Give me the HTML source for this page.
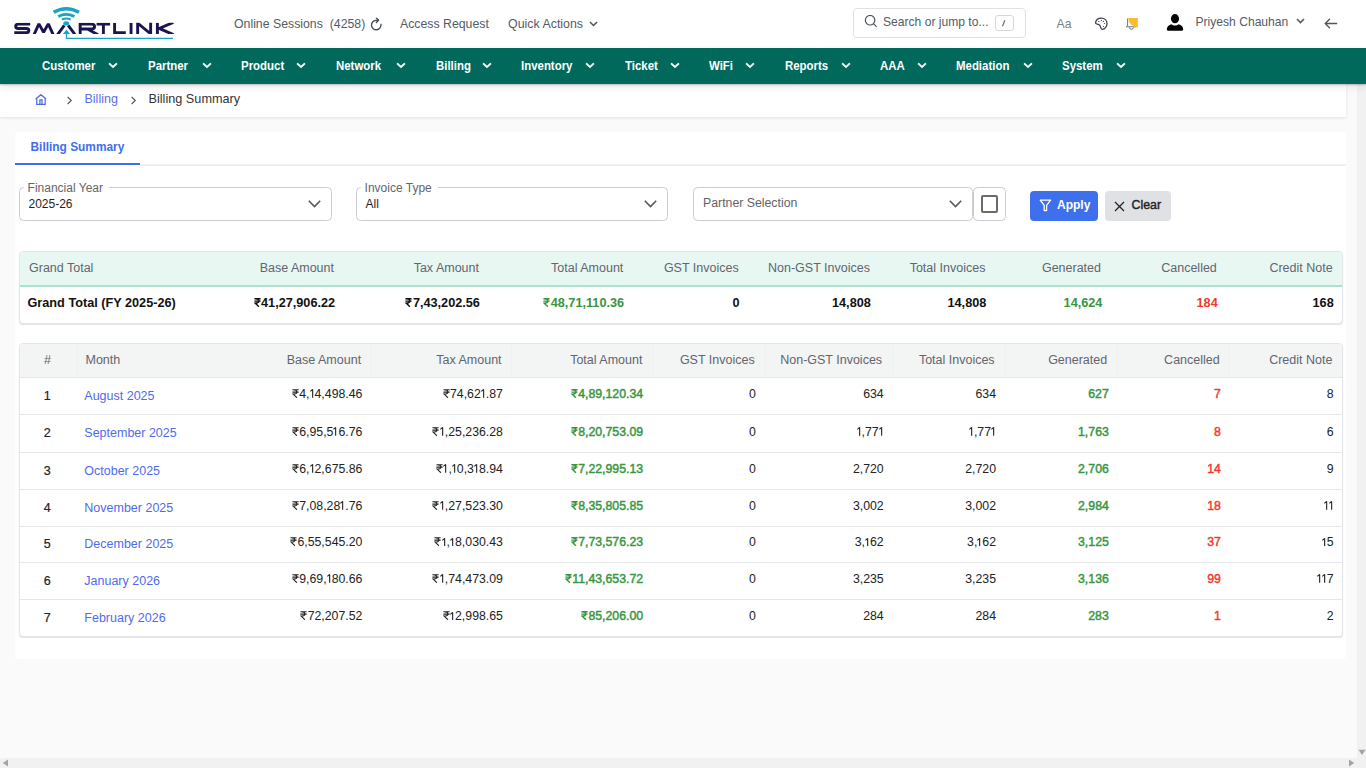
<!DOCTYPE html>
<html><head><meta charset="utf-8"><title>Billing Summary</title><style>
*{box-sizing:border-box;margin:0;padding:0}
html,body{width:1366px;height:768px;overflow:hidden;background:#fafafa;font-family:"Liberation Sans",sans-serif;color:#222}
.t{position:absolute;line-height:1;white-space:nowrap}
.r{text-align:right}
svg.inr{display:inline-block;vertical-align:baseline;margin-right:0.5px;fill:none;stroke:currentColor;stroke-linecap:butt;stroke-linejoin:miter;position:relative;top:0}
#hdr{position:absolute;left:0;top:0;width:1366px;height:48px;background:#fff}
#nav{position:absolute;left:0;top:48px;width:1366px;height:36px;background:#00695c;box-shadow:0 1px 1.5px rgba(0,0,0,.22),0 3px 8px rgba(0,0,0,.09);z-index:3}
#nav .t{color:#fff;font-weight:700;font-size:12.3px;transform:scaleX(.93);transform-origin:0 0}
#nav svg{position:absolute;top:62px}
#crumb{position:absolute;left:0;top:84px;width:1346px;height:33px;background:#fff;box-shadow:0 1px 3px rgba(0,0,0,.1)}
#card{position:absolute;left:15px;top:132px;width:1331px;height:527px;background:#fff;border-radius:4px}
.fld{position:absolute;border:1px solid #c9ccd3;border-radius:4.5px;background:#fff}
.lbl{position:absolute;background:#fff;padding:0 4px;color:#62666b;font-size:12px;line-height:1}
.tbl{position:absolute;border:1px solid #e3e5e8;border-radius:4px;background:#fff;overflow:hidden;box-shadow:0 1px 0 #e6e7eb,0 1px 2px rgba(0,0,0,.05)}
.sb{position:absolute;background:#f1f1f1}
svg.one{display:inline-block;vertical-align:baseline;fill:none;stroke:currentColor;stroke-width:1.1}
</style></head><body>
<div id="hdr">
<svg style="position:absolute;left:0;top:0" width="180" height="46" viewBox="0 0 180 46">
<defs><clipPath id="lc"><rect x="0" y="22.8" width="180" height="11.3"/></clipPath></defs>
<g fill="none" stroke="#1b1452" stroke-width="2.9" stroke-linejoin="miter" stroke-linecap="butt" clip-path="url(#lc)">
<path d="M30.2 24.15H18.2Q15.65 24.15 15.65 26.3Q15.65 28.45 18.2 28.45H26.3Q28.85 28.45 28.85 30.6Q28.85 32.75 26.3 32.75H14.3"/>
<path d="M33.6 35.6L38.9 23.9L43.6 32.2L48.3 23.9L53.6 35.6" stroke-linejoin="bevel"/>
<path d="M57 35.4L64.3 25.3M68.2 25.3L75.6 35.4"/>
<path d="M80.15 34.1V24.15H91.6Q94.6 24.15 94.6 26.55Q94.6 28.95 91.6 28.95H80.15M87.5 28.95L98 34.8"/>
<path d="M96.6 24.15H110.1M103.4 24.15V34.1"/>
<path d="M114.6 22.8V32.75H125.8"/>
<path d="M131.05 22.8V34.1"/>
<path d="M137.65 35V23.2L150.65 33.8V22"/>
<path d="M157.4 22.8V34.1M173.3 22.4L159.2 28.45L173.4 34.6"/>
</g>
<g fill="none" stroke="#1ba3c2" stroke-linecap="butt">
<path d="M53.6 12.3Q66.3 5.2 79 12.3" stroke-width="3.4"/>
<path d="M58.2 16.6Q66.3 12.2 74.4 16.6" stroke-width="2.9"/>
<path d="M62 19.6Q66.3 17.4 70.6 19.6" stroke-width="2.2"/>
<path d="M66.5 34V38.3H172.9" stroke-width="1.3"/>
</g>
<ellipse cx="66.2" cy="23.4" rx="2.9" ry="2.1" fill="#1ba3c2"/>
<path d="M62.9 34.1L66.5 29.5L70.1 34.1Z" fill="#1ba3c2"/>
</svg>
<div class="t" style="left:234px;top:17.5px;font-size:12.3px;color:#555b63">Online Sessions&nbsp; (4258)</div>
<svg style="position:absolute;left:368px;top:16px" width="16" height="16" viewBox="0 0 16 16" fill="none" stroke="#454b52" stroke-width="1.35" stroke-linecap="round" stroke-linejoin="round"><path d="M12.95 8.3A4.75 4.75 0 1 1 7.9 4.3H10.4"/><path d="M8.4 2.2L10.6 4.3L8.4 6.5"/></svg>
<div class="t" style="left:400px;top:17.5px;font-size:12.3px;color:#555b63">Access Request</div>
<div class="t" style="left:508px;top:17.5px;font-size:12.4px;color:#555b63">Quick Actions</div>
<svg style="position:absolute;left:589px;top:20.5px" width="9" height="6" viewBox="0 0 9 6" fill="none" stroke="#4a5058" stroke-width="1.5"><path d="M1 1l3.5 3.5 3.5-3.5"/></svg>
<div style="position:absolute;left:852.5px;top:8px;width:173.5px;height:30px;border:1px solid #dfe1e5;border-radius:4px"></div>
<svg style="position:absolute;left:864px;top:14.5px" width="14" height="14" viewBox="0 0 14 14" fill="none" stroke="#4b5158" stroke-width="1.2"><circle cx="6.1" cy="5.25" r="4.75"/><path d="M9.5 8.7L12.6 11.9"/></svg>
<div class="t" style="left:883px;top:16px;font-size:12.1px;color:#555b63">Search or jump to...</div>
<div style="position:absolute;left:994.5px;top:15px;width:19px;height:15.5px;border:1px solid #d5d8dc;border-radius:3px"></div>
<svg style="position:absolute;left:1000px;top:18px" width="8" height="10" viewBox="0 0 8 10" fill="none" stroke="#5a6067" stroke-width="1.1"><path d="M4.9 2.1L2.5 8.3"/></svg>
<div class="t" style="left:1056.5px;top:18.3px;font-size:12.2px;color:#7a7f85">Aa</div>
<svg style="position:absolute;left:1094px;top:17px" width="15" height="14" viewBox="0 0 15 14" fill="none" stroke="#3d434a" stroke-width="1.3"><path d="M1.5 5.9C1.9 3 4.5 1.1 7.4 1.1C10.6 1.1 13 3.4 13 6.5C13 9.7 10.8 12.3 8.3 12.3C6.9 12.3 6.8 10.9 6.5 9.7C6.2 8.3 5.5 7.8 4.2 7.4C2.8 7 1.4 7 1.5 5.9Z"/><g fill="#3d434a" stroke="none"><circle cx="4.8" cy="4.4" r=".6"/><circle cx="7.4" cy="3.5" r=".6"/><circle cx="9.5" cy="4.4" r=".6"/><circle cx="10.5" cy="6.5" r=".6"/><circle cx="9.4" cy="9.3" r=".6"/></g></svg>
<svg style="position:absolute;left:1124px;top:17px" width="15" height="14" viewBox="0 0 15 14" fill="none" stroke="#70767d" stroke-width="1.0"><path d="M3.6 1.5V8.2C3.6 9 3 9.5 2.3 9.8H12.3"/><path d="M5.3 10.5A2.1 1.7 0 0 0 9.5 10.5"/><path d="M13.85 0.9H4.2A9.65 9.45 0 0 0 13.85 10.35Z" fill="#fbbd2e" stroke="none"/></svg>
<svg style="position:absolute;left:1166px;top:13.5px" width="18" height="18" viewBox="0 0 18 18" fill="#000"><ellipse cx="9" cy="4.65" rx="4.05" ry="4.6"/><path d="M0.8 15.3C0.8 12.5 2.9 10.9 5.4 10.2C6.4 11.1 7.6 11.5 9 11.5C10.4 11.5 11.6 11.1 12.6 10.2C15.1 10.9 17.2 12.5 17.2 15.3V15.5C17.2 16.2 16.7 16.7 16 16.7H2C1.3 16.7 0.8 16.2 0.8 15.5Z"/></svg>
<div class="t" style="left:1195.5px;top:16px;font-size:12.1px;color:#555b63">Priyesh Chauhan</div>
<svg style="position:absolute;left:1296.3px;top:17.9px" width="9" height="6" viewBox="0 0 9 6" fill="none" stroke="#555b63" stroke-width="1.6"><path d="M1 1l3.5 3.5 3.5-3.5"/></svg>
<svg style="position:absolute;left:1323.5px;top:18px" width="14" height="12" viewBox="0 0 14 12" fill="none" stroke="#4f555c" stroke-width="1.3"><path d="M13.2 5.5H1.2M5.9 0.8L1.2 5.5 5.9 10.2"/></svg>
</div>
<div id="nav">
<div class="t" style="left:41.6px;top:12.2px">Customer</div>
<svg style="position:absolute;left:107.8px;top:14.1px" width="10" height="7" viewBox="0 0 10 7" fill="none" stroke="#fff" stroke-width="1.85"><path d="M1.1 1.3l3.9 3.7 3.9-3.7"/></svg>
<div class="t" style="left:147.6px;top:12.2px">Partner</div>
<svg style="position:absolute;left:201.7px;top:14.1px" width="10" height="7" viewBox="0 0 10 7" fill="none" stroke="#fff" stroke-width="1.85"><path d="M1.1 1.3l3.9 3.7 3.9-3.7"/></svg>
<div class="t" style="left:241.1px;top:12.2px">Product</div>
<svg style="position:absolute;left:296.2px;top:14.1px" width="10" height="7" viewBox="0 0 10 7" fill="none" stroke="#fff" stroke-width="1.85"><path d="M1.1 1.3l3.9 3.7 3.9-3.7"/></svg>
<div class="t" style="left:335.6px;top:12.2px">Network</div>
<svg style="position:absolute;left:396.0px;top:14.1px" width="10" height="7" viewBox="0 0 10 7" fill="none" stroke="#fff" stroke-width="1.85"><path d="M1.1 1.3l3.9 3.7 3.9-3.7"/></svg>
<div class="t" style="left:435.5px;top:12.2px">Billing</div>
<svg style="position:absolute;left:481.8px;top:14.1px" width="10" height="7" viewBox="0 0 10 7" fill="none" stroke="#fff" stroke-width="1.85"><path d="M1.1 1.3l3.9 3.7 3.9-3.7"/></svg>
<div class="t" style="left:520.8px;top:12.2px">Inventory</div>
<svg style="position:absolute;left:584.8px;top:14.1px" width="10" height="7" viewBox="0 0 10 7" fill="none" stroke="#fff" stroke-width="1.85"><path d="M1.1 1.3l3.9 3.7 3.9-3.7"/></svg>
<div class="t" style="left:624.6px;top:12.2px">Ticket</div>
<svg style="position:absolute;left:670.1px;top:14.1px" width="10" height="7" viewBox="0 0 10 7" fill="none" stroke="#fff" stroke-width="1.85"><path d="M1.1 1.3l3.9 3.7 3.9-3.7"/></svg>
<div class="t" style="left:709.1px;top:12.2px">WiFi</div>
<svg style="position:absolute;left:745.4px;top:14.1px" width="10" height="7" viewBox="0 0 10 7" fill="none" stroke="#fff" stroke-width="1.85"><path d="M1.1 1.3l3.9 3.7 3.9-3.7"/></svg>
<div class="t" style="left:784.5px;top:12.2px">Reports</div>
<svg style="position:absolute;left:840.7px;top:14.1px" width="10" height="7" viewBox="0 0 10 7" fill="none" stroke="#fff" stroke-width="1.85"><path d="M1.1 1.3l3.9 3.7 3.9-3.7"/></svg>
<div class="t" style="left:880.1px;top:12.2px">AAA</div>
<svg style="position:absolute;left:916.5px;top:14.1px" width="10" height="7" viewBox="0 0 10 7" fill="none" stroke="#fff" stroke-width="1.85"><path d="M1.1 1.3l3.9 3.7 3.9-3.7"/></svg>
<div class="t" style="left:955.9px;top:12.2px">Mediation</div>
<svg style="position:absolute;left:1022.7px;top:14.1px" width="10" height="7" viewBox="0 0 10 7" fill="none" stroke="#fff" stroke-width="1.85"><path d="M1.1 1.3l3.9 3.7 3.9-3.7"/></svg>
<div class="t" style="left:1061.6px;top:12.2px">System</div>
<svg style="position:absolute;left:1115.6px;top:14.1px" width="10" height="7" viewBox="0 0 10 7" fill="none" stroke="#fff" stroke-width="1.85"><path d="M1.1 1.3l3.9 3.7 3.9-3.7"/></svg>
</div>
<div id="crumb">
<svg style="position:absolute;left:34.5px;top:10px" width="12" height="11" viewBox="0 0 12 11" fill="none" stroke="#4a67ee" stroke-width="1.2"><path d="M0.6 5L5.9 0.7L11.2 5M1.8 4V10.4H10.2V4M4.9 10.4V5.8H7V10.4"/></svg>
<svg style="position:absolute;left:65.5px;top:11.5px" width="7" height="9" viewBox="0 0 7 9" fill="none" stroke="#4b5058" stroke-width="1.15"><path d="M1.6 0.9l3.6 3.6-3.6 3.6"/></svg>
<div class="t" style="left:84.5px;top:9px;font-size:12.5px;color:#5b6ee8">Billing</div>
<svg style="position:absolute;left:130.3px;top:11.5px" width="7" height="9" viewBox="0 0 7 9" fill="none" stroke="#4b5058" stroke-width="1.15"><path d="M1.6 0.9l3.6 3.6-3.6 3.6"/></svg>
<div class="t" style="left:148.5px;top:9px;font-size:12.7px;color:#333">Billing Summary</div>
</div>
<div id="card"></div>
<div class="t" style="left:30.5px;top:141.8px;font-size:11.9px;font-weight:700;color:#3e6fec">Billing Summary</div>
<div style="position:absolute;left:15px;top:163px;width:125px;height:2px;background:#3e6fec"></div>
<div style="position:absolute;left:140px;top:164px;width:1206px;height:1.5px;background:#eeeff1"></div>
<div class="fld" style="left:19.0px;top:187px;width:312.5px;height:34px"></div>
<div class="lbl" style="left:23.6px;top:181.5px;height:12px;padding:0 6.5px 0 4px">Financial Year</div>
<div class="t" style="left:28.5px;top:197.7px;font-size:12px;color:#1f1f1f">2025-26</div>
<svg style="position:absolute;left:307.7px;top:200px" width="13" height="8" viewBox="0 0 13 8" fill="none" stroke="#555" stroke-width="1.5"><path d="M0.8 0.8l5.7 5.8 5.7-5.8"/></svg>
<div class="fld" style="left:356.0px;top:187px;width:312.0px;height:34px"></div>
<div class="lbl" style="left:360.6px;top:181.5px;height:12px;padding:0 6.5px 0 4px">Invoice Type</div>
<div class="t" style="left:365.5px;top:197.7px;font-size:12px;color:#1f1f1f">All</div>
<svg style="position:absolute;left:644.2px;top:200px" width="13" height="8" viewBox="0 0 13 8" fill="none" stroke="#555" stroke-width="1.5"><path d="M0.8 0.8l5.7 5.8 5.7-5.8"/></svg>
<div class="fld" style="left:693px;top:187px;width:280px;height:34px"></div>
<div class="t" style="left:703px;top:196.5px;font-size:12.3px;color:#5f6368">Partner Selection</div>
<svg style="position:absolute;left:949px;top:200px" width="13" height="8" viewBox="0 0 13 8" fill="none" stroke="#555" stroke-width="1.5"><path d="M0.8 0.8l5.7 5.8 5.7-5.8"/></svg>
<div class="fld" style="left:972.5px;top:187px;width:33.5px;height:34px;background:transparent"></div>
<div style="position:absolute;left:980.5px;top:195.3px;width:17.3px;height:17.3px;border:2px solid #6b6b6b;border-radius:2px"></div>
<div style="position:absolute;left:1030px;top:191px;width:68px;height:30px;background:#3e6fec;border-radius:4px"></div>
<svg style="position:absolute;left:1038.5px;top:199.4px" width="13" height="13" viewBox="0 0 13 13" fill="none" stroke="#fff" stroke-width="1.3" stroke-linejoin="round"><path d="M1.2 1.2h10.4l-4 5.2v5.2H5.2V6.4z"/></svg>
<div class="t" style="left:1057px;top:198.5px;font-size:12px;font-weight:700;color:#fff">Apply</div>
<div style="position:absolute;left:1105px;top:191px;width:66px;height:30px;background:#dfe1e5;border-radius:4px"></div>
<svg style="position:absolute;left:1114px;top:200.5px" width="11" height="11" viewBox="0 0 11 11" fill="none" stroke="#222" stroke-width="1.3"><path d="M1 1l9 9M10 1l-9 9"/></svg>
<div class="t" style="left:1131.5px;top:198.5px;font-size:12.4px;color:#222;-webkit-text-stroke:.4px currentColor">Clear</div>
<div class="tbl" style="left:19px;top:251px;width:1324px;height:73px">
<div style="position:absolute;left:0;top:0;width:100%;height:33px;background:#e8f7f2"></div>
<div style="position:absolute;left:0;top:33px;width:100%;height:2px;background:#a9e3cd"></div>
</div>
<div class="t" style="left:29px;top:262.4px;font-size:12.5px;color:#5f6670">Grand Total</div>
<div class="t r" style="right:1032.0px;top:262.4px;font-size:12.5px;color:#5f6670">Base Amount</div>
<div class="t r" style="right:887.0px;top:262.4px;font-size:12.5px;color:#5f6670">Tax Amount</div>
<div class="t r" style="right:742.7px;top:262.4px;font-size:12.5px;color:#5f6670">Total Amount</div>
<div class="t r" style="right:627.3px;top:262.4px;font-size:12.5px;color:#5f6670">GST Invoices</div>
<div class="t r" style="right:496.1px;top:262.4px;font-size:12.5px;color:#5f6670">Non-GST Invoices</div>
<div class="t r" style="right:380.6px;top:262.4px;font-size:12.5px;color:#5f6670">Total Invoices</div>
<div class="t r" style="right:265.0px;top:262.4px;font-size:12.5px;color:#5f6670">Generated</div>
<div class="t r" style="right:149.2px;top:262.4px;font-size:12.5px;color:#5f6670">Cancelled</div>
<div class="t r" style="right:33.4px;top:262.4px;font-size:12.5px;color:#5f6670">Credit Note</div>
<div class="t" style="left:27.5px;top:296.5px;font-size:12.7px;font-weight:700;color:#111">Grand Total (FY 2025-26)</div>
<div class="t r" style="right:1030.9px;top:296.5px;font-size:12.7px;font-weight:700;color:#111"><svg class="inr" width="7" height="9" viewBox="0 0 7 9" style="stroke-width:1.45"><path d="M0.4 0.7H6.6M0.4 3.1H6.6M1.2 0.7C4.2 0.7 4.9 1.9 4.9 3C4.9 4.3 3.8 5.1 1.1 5.1L4.9 8.7"/></svg>41,27,906.22</div>
<div class="t r" style="right:886.1px;top:296.5px;font-size:12.7px;font-weight:700;color:#111"><svg class="inr" width="7" height="9" viewBox="0 0 7 9" style="stroke-width:1.45"><path d="M0.4 0.7H6.6M0.4 3.1H6.6M1.2 0.7C4.2 0.7 4.9 1.9 4.9 3C4.9 4.3 3.8 5.1 1.1 5.1L4.9 8.7"/></svg>7,43,202.56</div>
<div class="t r" style="right:741.9px;top:296.5px;font-size:12.7px;font-weight:700;color:#37963f"><svg class="inr" width="7" height="9" viewBox="0 0 7 9" style="stroke-width:1.45"><path d="M0.4 0.7H6.6M0.4 3.1H6.6M1.2 0.7C4.2 0.7 4.9 1.9 4.9 3C4.9 4.3 3.8 5.1 1.1 5.1L4.9 8.7"/></svg>48,71,110.36</div>
<div class="t r" style="right:626.4px;top:296.5px;font-size:12.7px;font-weight:700;color:#111">0</div>
<div class="t r" style="right:495.2px;top:296.5px;font-size:12.7px;font-weight:700;color:#111">14,808</div>
<div class="t r" style="right:379.7px;top:296.5px;font-size:12.7px;font-weight:700;color:#111">14,808</div>
<div class="t r" style="right:263.6px;top:296.5px;font-size:12.7px;font-weight:700;color:#37963f">14,624</div>
<div class="t r" style="right:148.3px;top:296.5px;font-size:12.7px;font-weight:700;color:#ef3b2d">184</div>
<div class="t r" style="right:32.3px;top:296.5px;font-size:12.7px;font-weight:700;color:#111">168</div>
<div class="tbl" style="left:19px;top:343px;width:1324px;height:294px">
<div style="position:absolute;left:0;top:0;width:100%;height:33px;background:#f3f4f4"></div>
<div style="position:absolute;left:56.5px;top:0;width:1px;height:33px;background:#eeefef"></div>
<div style="position:absolute;left:351.3px;top:0;width:1px;height:33px;background:#eeefef"></div>
<div style="position:absolute;left:491.0px;top:0;width:1px;height:33px;background:#eeefef"></div>
<div style="position:absolute;left:632.0px;top:0;width:1px;height:33px;background:#eeefef"></div>
<div style="position:absolute;left:744.7px;top:0;width:1px;height:33px;background:#eeefef"></div>
<div style="position:absolute;left:872.0px;top:0;width:1px;height:33px;background:#eeefef"></div>
<div style="position:absolute;left:984.5px;top:0;width:1px;height:33px;background:#eeefef"></div>
<div style="position:absolute;left:1096.6px;top:0;width:1px;height:33px;background:#eeefef"></div>
<div style="position:absolute;left:1208.0px;top:0;width:1px;height:33px;background:#eeefef"></div>
<div style="position:absolute;left:0;top:32.7px;width:100%;height:1.4px;background:#e6e7ea"></div>
<div style="position:absolute;left:0;top:70.1px;width:100%;height:1.4px;background:#e6e7ea"></div>
<div style="position:absolute;left:0;top:107.9px;width:100%;height:1.4px;background:#e6e7ea"></div>
<div style="position:absolute;left:0;top:145.0px;width:100%;height:1.4px;background:#e6e7ea"></div>
<div style="position:absolute;left:0;top:181.7px;width:100%;height:1.4px;background:#e6e7ea"></div>
<div style="position:absolute;left:0;top:217.9px;width:100%;height:1.4px;background:#e6e7ea"></div>
<div style="position:absolute;left:0;top:255.1px;width:100%;height:1.4px;background:#e6e7ea"></div>
</div>
<div class="t" style="left:44px;top:353.5px;font-size:12.5px;color:#5f6670">#</div>
<div class="t" style="left:85.5px;top:353.5px;font-size:12.5px;color:#5f6670">Month</div>
<div class="t r" style="right:1004.9px;top:353.5px;font-size:12.5px;color:#5f6670">Base Amount</div>
<div class="t r" style="right:864.4px;top:353.5px;font-size:12.5px;color:#5f6670">Tax Amount</div>
<div class="t r" style="right:723.6px;top:353.5px;font-size:12.5px;color:#5f6670">Total Amount</div>
<div class="t r" style="right:611.3px;top:353.5px;font-size:12.5px;color:#5f6670">GST Invoices</div>
<div class="t r" style="right:483.9px;top:353.5px;font-size:12.5px;color:#5f6670">Non-GST Invoices</div>
<div class="t r" style="right:371.4px;top:353.5px;font-size:12.5px;color:#5f6670">Total Invoices</div>
<div class="t r" style="right:258.8px;top:353.5px;font-size:12.5px;color:#5f6670">Generated</div>
<div class="t r" style="right:146.3px;top:353.5px;font-size:12.5px;color:#5f6670">Cancelled</div>
<div class="t r" style="right:33.6px;top:353.5px;font-size:12.5px;color:#5f6670">Credit Note</div>
<div class="t" style="left:37.2px;width:20px;text-align:center;top:389.7px;font-size:12.5px;color:#222;-webkit-text-stroke:.2px currentColor">1</div>
<div class="t" style="left:84.3px;top:389.7px;font-size:12.5px;color:#4f6bed">August 2025</div>
<div class="t r" style="right:1003.6px;top:387.9px;font-size:12.3px;color:#222"><svg class="inr" width="7" height="9" viewBox="0 0 7 9" style="stroke-width:1.1"><path d="M0.4 0.7H6.6M0.4 3.1H6.6M1.2 0.7C4.2 0.7 4.9 1.9 4.9 3C4.9 4.3 3.8 5.1 1.1 5.1L4.9 8.7"/></svg>4,<svg class="one" width="5" height="8.8" viewBox="0 0 5 8.8"><path d="M2.65 0.15V8.8M2.65 0.4L0.35 2.3"/></svg>4,498.46</div>
<div class="t r" style="right:863.1px;top:387.9px;font-size:12.3px;color:#222"><svg class="inr" width="7" height="9" viewBox="0 0 7 9" style="stroke-width:1.1"><path d="M0.4 0.7H6.6M0.4 3.1H6.6M1.2 0.7C4.2 0.7 4.9 1.9 4.9 3C4.9 4.3 3.8 5.1 1.1 5.1L4.9 8.7"/></svg>74,62<svg class="one" width="5" height="8.8" viewBox="0 0 5 8.8"><path d="M2.65 0.15V8.8M2.65 0.4L0.35 2.3"/></svg>.87</div>
<div class="t r" style="right:722.9px;top:387.9px;font-size:12.3px;color:#37963f;-webkit-text-stroke:.45px currentColor"><svg class="inr" width="7" height="9" viewBox="0 0 7 9" style="stroke-width:1.45"><path d="M0.4 0.7H6.6M0.4 3.1H6.6M1.2 0.7C4.2 0.7 4.9 1.9 4.9 3C4.9 4.3 3.8 5.1 1.1 5.1L4.9 8.7"/></svg>4,89,120.34</div>
<div class="t r" style="right:610.1px;top:387.9px;font-size:12.3px;color:#222">0</div>
<div class="t r" style="right:482.3px;top:387.9px;font-size:12.3px;color:#222">634</div>
<div class="t r" style="right:370.0px;top:387.9px;font-size:12.3px;color:#222">634</div>
<div class="t r" style="right:257.2px;top:387.9px;font-size:12.3px;color:#37963f;-webkit-text-stroke:.45px currentColor">627</div>
<div class="t r" style="right:145.2px;top:387.9px;font-size:12.3px;color:#ef3b2d;-webkit-text-stroke:.45px currentColor">7</div>
<div class="t r" style="right:32.3px;top:387.9px;font-size:12.3px;color:#222">8</div>
<div class="t" style="left:37.2px;width:20px;text-align:center;top:427.3px;font-size:12.5px;color:#222;-webkit-text-stroke:.2px currentColor">2</div>
<div class="t" style="left:84.3px;top:427.3px;font-size:12.5px;color:#4f6bed">September 2025</div>
<div class="t r" style="right:1003.6px;top:425.5px;font-size:12.3px;color:#222"><svg class="inr" width="7" height="9" viewBox="0 0 7 9" style="stroke-width:1.1"><path d="M0.4 0.7H6.6M0.4 3.1H6.6M1.2 0.7C4.2 0.7 4.9 1.9 4.9 3C4.9 4.3 3.8 5.1 1.1 5.1L4.9 8.7"/></svg>6,95,5<svg class="one" width="5" height="8.8" viewBox="0 0 5 8.8"><path d="M2.65 0.15V8.8M2.65 0.4L0.35 2.3"/></svg>6.76</div>
<div class="t r" style="right:863.1px;top:425.5px;font-size:12.3px;color:#222"><svg class="inr" width="7" height="9" viewBox="0 0 7 9" style="stroke-width:1.1"><path d="M0.4 0.7H6.6M0.4 3.1H6.6M1.2 0.7C4.2 0.7 4.9 1.9 4.9 3C4.9 4.3 3.8 5.1 1.1 5.1L4.9 8.7"/></svg><svg class="one" width="5" height="8.8" viewBox="0 0 5 8.8"><path d="M2.65 0.15V8.8M2.65 0.4L0.35 2.3"/></svg>,25,236.28</div>
<div class="t r" style="right:722.9px;top:425.5px;font-size:12.3px;color:#37963f;-webkit-text-stroke:.45px currentColor"><svg class="inr" width="7" height="9" viewBox="0 0 7 9" style="stroke-width:1.45"><path d="M0.4 0.7H6.6M0.4 3.1H6.6M1.2 0.7C4.2 0.7 4.9 1.9 4.9 3C4.9 4.3 3.8 5.1 1.1 5.1L4.9 8.7"/></svg>8,20,753.09</div>
<div class="t r" style="right:610.1px;top:425.5px;font-size:12.3px;color:#222">0</div>
<div class="t r" style="right:482.3px;top:425.5px;font-size:12.3px;color:#222"><svg class="one" width="5" height="8.8" viewBox="0 0 5 8.8"><path d="M2.65 0.15V8.8M2.65 0.4L0.35 2.3"/></svg>,77<svg class="one" width="5" height="8.8" viewBox="0 0 5 8.8"><path d="M2.65 0.15V8.8M2.65 0.4L0.35 2.3"/></svg></div>
<div class="t r" style="right:370.0px;top:425.5px;font-size:12.3px;color:#222"><svg class="one" width="5" height="8.8" viewBox="0 0 5 8.8"><path d="M2.65 0.15V8.8M2.65 0.4L0.35 2.3"/></svg>,77<svg class="one" width="5" height="8.8" viewBox="0 0 5 8.8"><path d="M2.65 0.15V8.8M2.65 0.4L0.35 2.3"/></svg></div>
<div class="t r" style="right:257.2px;top:425.5px;font-size:12.3px;color:#37963f;-webkit-text-stroke:.45px currentColor">1,763</div>
<div class="t r" style="right:145.2px;top:425.5px;font-size:12.3px;color:#ef3b2d;-webkit-text-stroke:.45px currentColor">8</div>
<div class="t r" style="right:32.3px;top:425.5px;font-size:12.3px;color:#222">6</div>
<div class="t" style="left:37.2px;width:20px;text-align:center;top:464.8px;font-size:12.5px;color:#222;-webkit-text-stroke:.2px currentColor">3</div>
<div class="t" style="left:84.3px;top:464.8px;font-size:12.5px;color:#4f6bed">October 2025</div>
<div class="t r" style="right:1003.6px;top:463.0px;font-size:12.3px;color:#222"><svg class="inr" width="7" height="9" viewBox="0 0 7 9" style="stroke-width:1.1"><path d="M0.4 0.7H6.6M0.4 3.1H6.6M1.2 0.7C4.2 0.7 4.9 1.9 4.9 3C4.9 4.3 3.8 5.1 1.1 5.1L4.9 8.7"/></svg>6,<svg class="one" width="5" height="8.8" viewBox="0 0 5 8.8"><path d="M2.65 0.15V8.8M2.65 0.4L0.35 2.3"/></svg>2,675.86</div>
<div class="t r" style="right:863.1px;top:463.0px;font-size:12.3px;color:#222"><svg class="inr" width="7" height="9" viewBox="0 0 7 9" style="stroke-width:1.1"><path d="M0.4 0.7H6.6M0.4 3.1H6.6M1.2 0.7C4.2 0.7 4.9 1.9 4.9 3C4.9 4.3 3.8 5.1 1.1 5.1L4.9 8.7"/></svg><svg class="one" width="5" height="8.8" viewBox="0 0 5 8.8"><path d="M2.65 0.15V8.8M2.65 0.4L0.35 2.3"/></svg>,<svg class="one" width="5" height="8.8" viewBox="0 0 5 8.8"><path d="M2.65 0.15V8.8M2.65 0.4L0.35 2.3"/></svg>0,3<svg class="one" width="5" height="8.8" viewBox="0 0 5 8.8"><path d="M2.65 0.15V8.8M2.65 0.4L0.35 2.3"/></svg>8.94</div>
<div class="t r" style="right:722.9px;top:463.0px;font-size:12.3px;color:#37963f;-webkit-text-stroke:.45px currentColor"><svg class="inr" width="7" height="9" viewBox="0 0 7 9" style="stroke-width:1.45"><path d="M0.4 0.7H6.6M0.4 3.1H6.6M1.2 0.7C4.2 0.7 4.9 1.9 4.9 3C4.9 4.3 3.8 5.1 1.1 5.1L4.9 8.7"/></svg>7,22,995.13</div>
<div class="t r" style="right:610.1px;top:463.0px;font-size:12.3px;color:#222">0</div>
<div class="t r" style="right:482.3px;top:463.0px;font-size:12.3px;color:#222">2,720</div>
<div class="t r" style="right:370.0px;top:463.0px;font-size:12.3px;color:#222">2,720</div>
<div class="t r" style="right:257.2px;top:463.0px;font-size:12.3px;color:#37963f;-webkit-text-stroke:.45px currentColor">2,706</div>
<div class="t r" style="right:145.2px;top:463.0px;font-size:12.3px;color:#ef3b2d;-webkit-text-stroke:.45px currentColor">14</div>
<div class="t r" style="right:32.3px;top:463.0px;font-size:12.3px;color:#222">9</div>
<div class="t" style="left:37.2px;width:20px;text-align:center;top:501.7px;font-size:12.5px;color:#222;-webkit-text-stroke:.2px currentColor">4</div>
<div class="t" style="left:84.3px;top:501.7px;font-size:12.5px;color:#4f6bed">November 2025</div>
<div class="t r" style="right:1003.6px;top:499.9px;font-size:12.3px;color:#222"><svg class="inr" width="7" height="9" viewBox="0 0 7 9" style="stroke-width:1.1"><path d="M0.4 0.7H6.6M0.4 3.1H6.6M1.2 0.7C4.2 0.7 4.9 1.9 4.9 3C4.9 4.3 3.8 5.1 1.1 5.1L4.9 8.7"/></svg>7,08,28<svg class="one" width="5" height="8.8" viewBox="0 0 5 8.8"><path d="M2.65 0.15V8.8M2.65 0.4L0.35 2.3"/></svg>.76</div>
<div class="t r" style="right:863.1px;top:499.9px;font-size:12.3px;color:#222"><svg class="inr" width="7" height="9" viewBox="0 0 7 9" style="stroke-width:1.1"><path d="M0.4 0.7H6.6M0.4 3.1H6.6M1.2 0.7C4.2 0.7 4.9 1.9 4.9 3C4.9 4.3 3.8 5.1 1.1 5.1L4.9 8.7"/></svg><svg class="one" width="5" height="8.8" viewBox="0 0 5 8.8"><path d="M2.65 0.15V8.8M2.65 0.4L0.35 2.3"/></svg>,27,523.30</div>
<div class="t r" style="right:722.9px;top:499.9px;font-size:12.3px;color:#37963f;-webkit-text-stroke:.45px currentColor"><svg class="inr" width="7" height="9" viewBox="0 0 7 9" style="stroke-width:1.45"><path d="M0.4 0.7H6.6M0.4 3.1H6.6M1.2 0.7C4.2 0.7 4.9 1.9 4.9 3C4.9 4.3 3.8 5.1 1.1 5.1L4.9 8.7"/></svg>8,35,805.85</div>
<div class="t r" style="right:610.1px;top:499.9px;font-size:12.3px;color:#222">0</div>
<div class="t r" style="right:482.3px;top:499.9px;font-size:12.3px;color:#222">3,002</div>
<div class="t r" style="right:370.0px;top:499.9px;font-size:12.3px;color:#222">3,002</div>
<div class="t r" style="right:257.2px;top:499.9px;font-size:12.3px;color:#37963f;-webkit-text-stroke:.45px currentColor">2,984</div>
<div class="t r" style="right:145.2px;top:499.9px;font-size:12.3px;color:#ef3b2d;-webkit-text-stroke:.45px currentColor">18</div>
<div class="t r" style="right:32.3px;top:499.9px;font-size:12.3px;color:#222"><svg class="one" width="5" height="8.8" viewBox="0 0 5 8.8"><path d="M2.65 0.15V8.8M2.65 0.4L0.35 2.3"/></svg><svg class="one" width="5" height="8.8" viewBox="0 0 5 8.8"><path d="M2.65 0.15V8.8M2.65 0.4L0.35 2.3"/></svg></div>
<div class="t" style="left:37.2px;width:20px;text-align:center;top:538.1px;font-size:12.5px;color:#222;-webkit-text-stroke:.2px currentColor">5</div>
<div class="t" style="left:84.3px;top:538.1px;font-size:12.5px;color:#4f6bed">December 2025</div>
<div class="t r" style="right:1003.6px;top:536.3px;font-size:12.3px;color:#222"><svg class="inr" width="7" height="9" viewBox="0 0 7 9" style="stroke-width:1.1"><path d="M0.4 0.7H6.6M0.4 3.1H6.6M1.2 0.7C4.2 0.7 4.9 1.9 4.9 3C4.9 4.3 3.8 5.1 1.1 5.1L4.9 8.7"/></svg>6,55,545.20</div>
<div class="t r" style="right:863.1px;top:536.3px;font-size:12.3px;color:#222"><svg class="inr" width="7" height="9" viewBox="0 0 7 9" style="stroke-width:1.1"><path d="M0.4 0.7H6.6M0.4 3.1H6.6M1.2 0.7C4.2 0.7 4.9 1.9 4.9 3C4.9 4.3 3.8 5.1 1.1 5.1L4.9 8.7"/></svg><svg class="one" width="5" height="8.8" viewBox="0 0 5 8.8"><path d="M2.65 0.15V8.8M2.65 0.4L0.35 2.3"/></svg>,<svg class="one" width="5" height="8.8" viewBox="0 0 5 8.8"><path d="M2.65 0.15V8.8M2.65 0.4L0.35 2.3"/></svg>8,030.43</div>
<div class="t r" style="right:722.9px;top:536.3px;font-size:12.3px;color:#37963f;-webkit-text-stroke:.45px currentColor"><svg class="inr" width="7" height="9" viewBox="0 0 7 9" style="stroke-width:1.45"><path d="M0.4 0.7H6.6M0.4 3.1H6.6M1.2 0.7C4.2 0.7 4.9 1.9 4.9 3C4.9 4.3 3.8 5.1 1.1 5.1L4.9 8.7"/></svg>7,73,576.23</div>
<div class="t r" style="right:610.1px;top:536.3px;font-size:12.3px;color:#222">0</div>
<div class="t r" style="right:482.3px;top:536.3px;font-size:12.3px;color:#222">3,<svg class="one" width="5" height="8.8" viewBox="0 0 5 8.8"><path d="M2.65 0.15V8.8M2.65 0.4L0.35 2.3"/></svg>62</div>
<div class="t r" style="right:370.0px;top:536.3px;font-size:12.3px;color:#222">3,<svg class="one" width="5" height="8.8" viewBox="0 0 5 8.8"><path d="M2.65 0.15V8.8M2.65 0.4L0.35 2.3"/></svg>62</div>
<div class="t r" style="right:257.2px;top:536.3px;font-size:12.3px;color:#37963f;-webkit-text-stroke:.45px currentColor">3,125</div>
<div class="t r" style="right:145.2px;top:536.3px;font-size:12.3px;color:#ef3b2d;-webkit-text-stroke:.45px currentColor">37</div>
<div class="t r" style="right:32.3px;top:536.3px;font-size:12.3px;color:#222"><svg class="one" width="5" height="8.8" viewBox="0 0 5 8.8"><path d="M2.65 0.15V8.8M2.65 0.4L0.35 2.3"/></svg>5</div>
<div class="t" style="left:37.2px;width:20px;text-align:center;top:574.8px;font-size:12.5px;color:#222;-webkit-text-stroke:.2px currentColor">6</div>
<div class="t" style="left:84.3px;top:574.8px;font-size:12.5px;color:#4f6bed">January 2026</div>
<div class="t r" style="right:1003.6px;top:573.0px;font-size:12.3px;color:#222"><svg class="inr" width="7" height="9" viewBox="0 0 7 9" style="stroke-width:1.1"><path d="M0.4 0.7H6.6M0.4 3.1H6.6M1.2 0.7C4.2 0.7 4.9 1.9 4.9 3C4.9 4.3 3.8 5.1 1.1 5.1L4.9 8.7"/></svg>9,69,<svg class="one" width="5" height="8.8" viewBox="0 0 5 8.8"><path d="M2.65 0.15V8.8M2.65 0.4L0.35 2.3"/></svg>80.66</div>
<div class="t r" style="right:863.1px;top:573.0px;font-size:12.3px;color:#222"><svg class="inr" width="7" height="9" viewBox="0 0 7 9" style="stroke-width:1.1"><path d="M0.4 0.7H6.6M0.4 3.1H6.6M1.2 0.7C4.2 0.7 4.9 1.9 4.9 3C4.9 4.3 3.8 5.1 1.1 5.1L4.9 8.7"/></svg><svg class="one" width="5" height="8.8" viewBox="0 0 5 8.8"><path d="M2.65 0.15V8.8M2.65 0.4L0.35 2.3"/></svg>,74,473.09</div>
<div class="t r" style="right:722.9px;top:573.0px;font-size:12.3px;color:#37963f;-webkit-text-stroke:.45px currentColor"><svg class="inr" width="7" height="9" viewBox="0 0 7 9" style="stroke-width:1.45"><path d="M0.4 0.7H6.6M0.4 3.1H6.6M1.2 0.7C4.2 0.7 4.9 1.9 4.9 3C4.9 4.3 3.8 5.1 1.1 5.1L4.9 8.7"/></svg>11,43,653.72</div>
<div class="t r" style="right:610.1px;top:573.0px;font-size:12.3px;color:#222">0</div>
<div class="t r" style="right:482.3px;top:573.0px;font-size:12.3px;color:#222">3,235</div>
<div class="t r" style="right:370.0px;top:573.0px;font-size:12.3px;color:#222">3,235</div>
<div class="t r" style="right:257.2px;top:573.0px;font-size:12.3px;color:#37963f;-webkit-text-stroke:.45px currentColor">3,136</div>
<div class="t r" style="right:145.2px;top:573.0px;font-size:12.3px;color:#ef3b2d;-webkit-text-stroke:.45px currentColor">99</div>
<div class="t r" style="right:32.3px;top:573.0px;font-size:12.3px;color:#222"><svg class="one" width="5" height="8.8" viewBox="0 0 5 8.8"><path d="M2.65 0.15V8.8M2.65 0.4L0.35 2.3"/></svg><svg class="one" width="5" height="8.8" viewBox="0 0 5 8.8"><path d="M2.65 0.15V8.8M2.65 0.4L0.35 2.3"/></svg>7</div>
<div class="t" style="left:37.2px;width:20px;text-align:center;top:612.1px;font-size:12.5px;color:#222;-webkit-text-stroke:.2px currentColor">7</div>
<div class="t" style="left:84.3px;top:612.1px;font-size:12.5px;color:#4f6bed">February 2026</div>
<div class="t r" style="right:1003.6px;top:610.3px;font-size:12.3px;color:#222"><svg class="inr" width="7" height="9" viewBox="0 0 7 9" style="stroke-width:1.1"><path d="M0.4 0.7H6.6M0.4 3.1H6.6M1.2 0.7C4.2 0.7 4.9 1.9 4.9 3C4.9 4.3 3.8 5.1 1.1 5.1L4.9 8.7"/></svg>72,207.52</div>
<div class="t r" style="right:863.1px;top:610.3px;font-size:12.3px;color:#222"><svg class="inr" width="7" height="9" viewBox="0 0 7 9" style="stroke-width:1.1"><path d="M0.4 0.7H6.6M0.4 3.1H6.6M1.2 0.7C4.2 0.7 4.9 1.9 4.9 3C4.9 4.3 3.8 5.1 1.1 5.1L4.9 8.7"/></svg><svg class="one" width="5" height="8.8" viewBox="0 0 5 8.8"><path d="M2.65 0.15V8.8M2.65 0.4L0.35 2.3"/></svg>2,998.65</div>
<div class="t r" style="right:722.9px;top:610.3px;font-size:12.3px;color:#37963f;-webkit-text-stroke:.45px currentColor"><svg class="inr" width="7" height="9" viewBox="0 0 7 9" style="stroke-width:1.45"><path d="M0.4 0.7H6.6M0.4 3.1H6.6M1.2 0.7C4.2 0.7 4.9 1.9 4.9 3C4.9 4.3 3.8 5.1 1.1 5.1L4.9 8.7"/></svg>85,206.00</div>
<div class="t r" style="right:610.1px;top:610.3px;font-size:12.3px;color:#222">0</div>
<div class="t r" style="right:482.3px;top:610.3px;font-size:12.3px;color:#222">284</div>
<div class="t r" style="right:370.0px;top:610.3px;font-size:12.3px;color:#222">284</div>
<div class="t r" style="right:257.2px;top:610.3px;font-size:12.3px;color:#37963f;-webkit-text-stroke:.45px currentColor">283</div>
<div class="t r" style="right:145.2px;top:610.3px;font-size:12.3px;color:#ef3b2d;-webkit-text-stroke:.45px currentColor">1</div>
<div class="t r" style="right:32.3px;top:610.3px;font-size:12.3px;color:#222">2</div>
<div class="sb" style="left:1357px;top:84px;width:9px;height:674px"></div>
<svg style="position:absolute;left:1357.5px;top:749px" width="8" height="7" viewBox="0 0 8 7"><path d="M0.5 0.8h7L4 6z" fill="#a3a3a3"/></svg>
<div class="sb" style="left:0;top:758px;width:1366px;height:10px"></div>
<svg style="position:absolute;left:1.8px;top:759px" width="7" height="8" viewBox="0 0 7 8"><path d="M6 0.5v7L0.8 4z" fill="#a3a3a3"/></svg>
<svg style="position:absolute;left:1347.8px;top:758.8px" width="7" height="8" viewBox="0 0 7 8"><path d="M1 0.5v7L6.2 4z" fill="#a3a3a3"/></svg>
</body></html>
